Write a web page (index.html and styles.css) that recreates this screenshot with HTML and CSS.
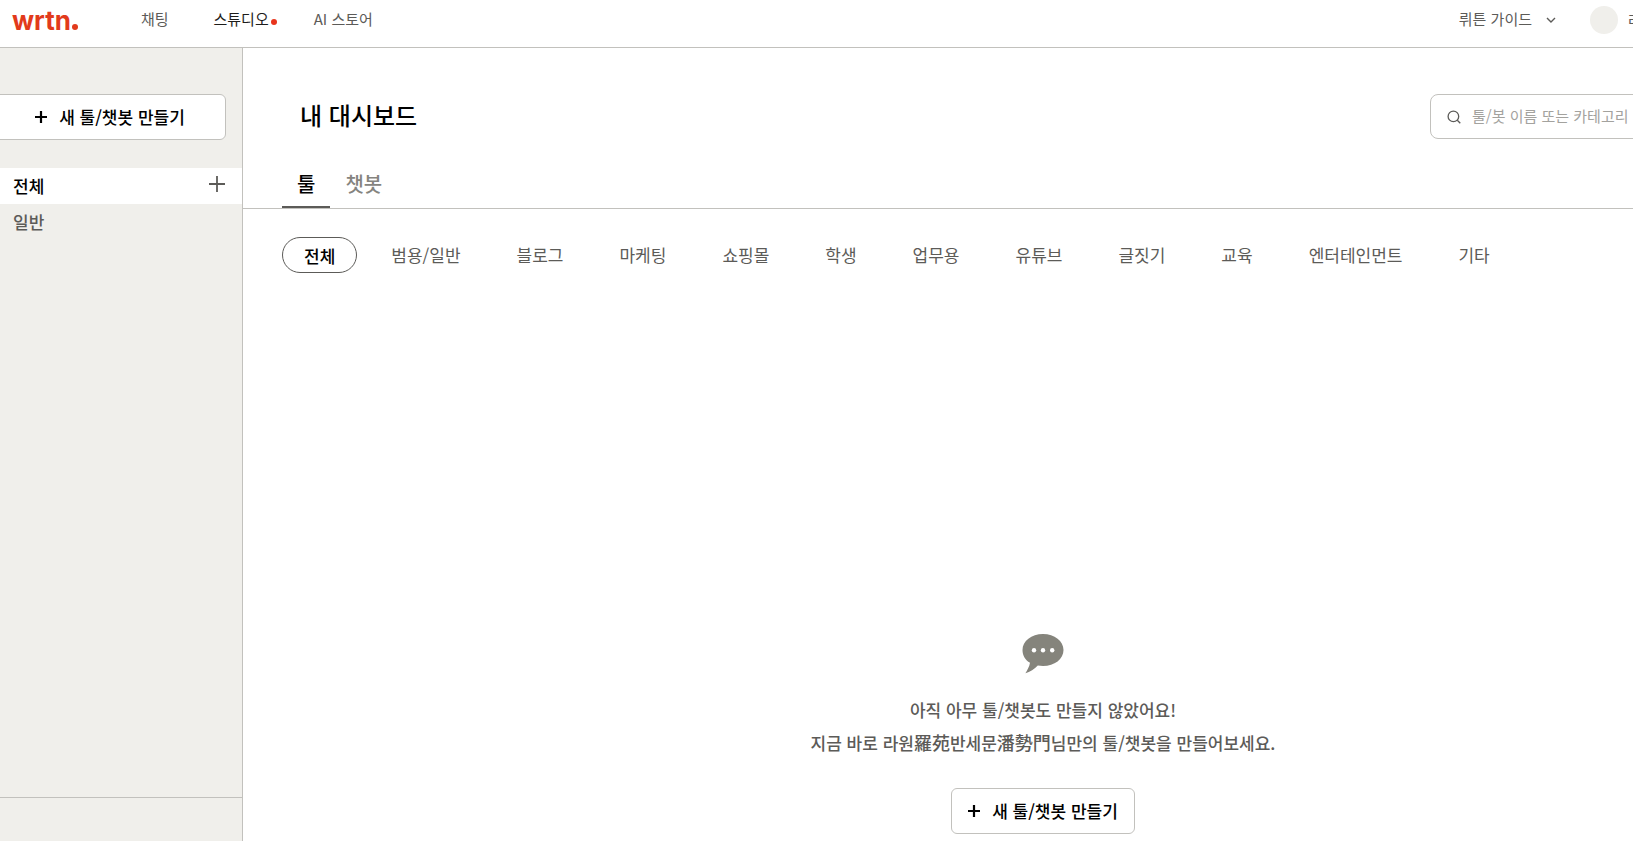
FILE: index.html
```html
<!DOCTYPE html>
<html lang="ko">
<head>
    <meta charset="UTF-8">
    <meta name="viewport" content="width=device-width, initial-scale=1">
    <title>뤼튼 스튜디오</title>
    <link rel="stylesheet" href="styles.css">
</head>
<body>
    <div class="page">
        <header class="header">
            <a class="logo" href="#">wrtn<span class="logo-dot"></span></a>
            <nav class="nav">
                <a href="#">채팅</a>
                <a class="active" href="#">스튜디오</a>
                <a href="#">AI 스토어</a>
            </nav>
            <div class="header-right">
                <button class="guide">
                    뤼튼 가이드
                    <svg width="10" height="10" viewBox="0 0 10 10" fill="none" stroke="currentColor" stroke-width="1.4"><path d="M1 4l4 4 4-4"/></svg>
                </button>
                <a class="user" href="#"><span class="avatar"></span>라원羅苑반세문潘勢門</a>
            </div>
        </header>
        <div class="content">
            <aside class="sidebar">
                <button class="create-btn">
                    <svg width="12" height="12" viewBox="0 0 12 12" stroke="currentColor" stroke-width="2.2"><path d="M6 0v12M0 6h12"/></svg>
                    <span>새 툴/챗봇 만들기</span>
                </button>
                <ul class="folders">
                    <li class="selected">
                        <a href="#">전체</a>
                        <button class="add-folder" aria-label="폴더 추가">
                            <svg width="16" height="16" viewBox="0 0 16 16" stroke="currentColor" stroke-width="1.8"><path d="M8 0v16M0 8h16"/></svg>
                        </button>
                    </li>
                    <li><a href="#">일반</a></li>
                </ul>
                <div class="sidebar-footer"></div>
            </aside>
            <main class="main">
                <div class="title-row">
                    <h1>내 대시보드</h1>
                    <div class="search">
                        <svg width="14" height="14" viewBox="0 0 14 14" fill="none" stroke="currentColor" stroke-width="1.3"><circle cx="6.4" cy="6.4" r="5.3"/><path d="M10.3 10.3l3 3"/></svg>
                        <input type="text" placeholder="툴/봇 이름 또는 카테고리" aria-label="검색">
                    </div>
                </div>
                <div class="tabs">
                    <button class="active">툴</button>
                    <button>챗봇</button>
                </div>
                <div class="categories">
                    <button class="active">전체</button>
                    <button>범용/일반</button>
                    <button>블로그</button>
                    <button>마케팅</button>
                    <button>쇼핑몰</button>
                    <button>학생</button>
                    <button>업무용</button>
                    <button>유튜브</button>
                    <button>글짓기</button>
                    <button>교육</button>
                    <button>엔터테인먼트</button>
                    <button>기타</button>
                </div>
                <section class="empty">
                    <svg width="42" height="40" viewBox="0 0 42 40">
                        <path fill="#85847c" d="M21 0C32.600 0 41.500 7 41.500 16S32.600 32 21 32c-1.800 0-3.600-.2-5.200-.5C12.500 35 8 38 3.400 39.200c1.800-2.800 4-6.500 4.600-10.400C3.300 26 .5 21.500.5 16 .5 7 9.400 0 21 0z"/>
                        <circle cx="12" cy="16.300" r="2.200" fill="#fff"/>
                        <circle cx="21" cy="16.300" r="2.200" fill="#fff"/>
                        <circle cx="30.200" cy="16.300" r="2.200" fill="#fff"/>
                    </svg>
                    <p>아직 아무 툴/챗봇도 만들지 않았어요!<br>지금 바로 라원<span class="hanja">羅苑</span>반세문<span class="hanja">潘勢門</span>님만의 툴/챗봇을 만들어보세요.</p>
                    <button class="create-btn">
                        <svg width="12" height="12" viewBox="0 0 12 12" stroke="currentColor" stroke-width="2.2"><path d="M6 0v12M0 6h12"/></svg>
                        <span>새 툴/챗봇 만들기</span>
                    </button>
                </section>
            </main>
        </div>
    </div>
</body>
</html>
```
FILE: styles.css
```css
* {
    box-sizing: border-box;
    margin: 0;
    padding: 0;
}
body {
    font-family: "Noto Sans CJK KR", "Noto Sans", sans-serif;
    font-size: 17px;
    font-weight: 500;
    color: #5c5b58;
    background-color: #fff;
    overflow: hidden;
}
a {
    color: inherit;
    text-decoration: none;
}
button {
    font: inherit;
    color: inherit;
    background: none;
    border: none;
    cursor: pointer;
}
.page {
    display: flex;
    flex-direction: column;
    width: calc(100% + 232px);
    min-height: 100vh;
    margin-left: -22px;
}

/* header */
.header {
    display: flex;
    align-items: center;
    height: 48px;
    padding: 0 71px 8px 34px;
    border-bottom: 1px solid #c2c1bd;
    font-size: 15px;
    font-weight: 400;
}
.logo {
    display: flex;
    align-items: baseline;
    gap: 1px;
    margin-right: 63px;
    padding-top: 2px;
    font-family: Inter, sans-serif;
    font-size: 26px;
    font-weight: 700;
    line-height: 32px;
    color: #e23a1b;
}
.logo-dot {
    width: 6px;
    height: 6px;
    border-radius: 50%;
    background-color: #e23a1b;
}
.nav {
    display: flex;
    gap: 45px;
    padding-bottom: 2px;
}
.nav .active {
    position: relative;
    color: #1d1c1a;
}
.nav .active::after {
    content: "";
    position: absolute;
    top: 11px;
    right: -8px;
    width: 6px;
    height: 6px;
    border-radius: 50%;
    background-color: #e8341c;
}
.header-right {
    display: flex;
    align-items: center;
    gap: 34px;
    margin-left: auto;
}
.guide {
    display: flex;
    align-items: center;
    gap: 14px;
    padding-bottom: 2px;
}
.user {
    display: flex;
    align-items: center;
    gap: 10px;
}
.avatar {
    width: 28px;
    height: 28px;
    border-radius: 50%;
    background-color: #f0efeb;
}

/* sidebar */
.content {
    display: flex;
    flex: 1;
}
.sidebar {
    display: flex;
    flex-direction: column;
    width: 265px;
    padding-top: 46px;
    background-color: #f0efeb;
    border-right: 1px solid #c2c1bd;
}
.create-btn {
    display: flex;
    align-items: center;
    justify-content: center;
    gap: 12px;
    height: 46px;
    padding: 0 16px;
    background-color: #fff;
    border: 1px solid #c2c1bd;
    border-radius: 6px;
    color: #000;
}
.create-btn span {
    padding-bottom: 2px;
}
.sidebar .create-btn {
    margin: 0 16px;
}
.folders {
    margin-top: 28px;
    list-style: none;
}
.folders li {
    display: flex;
    align-items: center;
    justify-content: space-between;
    height: 36px;
    padding: 0 17px 2px 35px;
}
.folders .selected {
    background-color: #fff;
    color: #000;
}
.add-folder {
    display: flex;
    padding-bottom: 2px;
    color: #5c5b58;
}
.sidebar-footer {
    height: 44px;
    margin-top: auto;
    border-top: 1px solid #c2c1bd;
}

/* dashboard */
.main {
    display: flex;
    flex: 1;
    flex-direction: column;
}
.title-row {
    display: flex;
    align-items: center;
    justify-content: space-between;
    padding: 46px 40px 0 57px;
}
h1 {
    padding-bottom: 4px;
    font-size: 24px;
    font-weight: 500;
    color: #000;
}
.search {
    display: flex;
    align-items: center;
    gap: 11px;
    width: 373px;
    height: 45px;
    padding: 0 16px;
    border: 1px solid #c2c1bd;
    border-radius: 8px;
}
.search input {
    flex: 1;
    padding-bottom: 2px;
    font: inherit;
    font-size: 15px;
    font-weight: 400;
    border: none;
    outline: none;
}
.search input::placeholder {
    color: #a3a29e;
}
.tabs {
    display: flex;
    height: 70px;
    padding: 22px 39px 0;
    border-bottom: 1px solid #c2c1bd;
}
.tabs button {
    padding: 0 15px 2px;
    font-size: 20px;
    color: #85847f;
}
.tabs .active {
    padding-bottom: 0;
    border-bottom: 2px solid #5c5b58;
    color: #000;
}
.categories {
    display: flex;
    gap: 12px;
    padding: 28px 39px 0;
}
.categories button {
    height: 36px;
    padding: 0 22px 2px;
    font-weight: 400;
    white-space: nowrap;
}
.categories .active {
    padding: 0 21px;
    border: 1px solid #5c5b58;
    border-radius: 18px;
    font-weight: 500;
    color: #000;
}
.empty {
    display: flex;
    flex: 1;
    flex-direction: column;
    align-items: center;
    justify-content: flex-end;
    padding-bottom: 7px;
    text-align: center;
}
.empty p {
    margin: 19px 0 29px;
    line-height: 33px;
}
.hanja {
    font-size: 18px;
    line-height: 1;
}
```
